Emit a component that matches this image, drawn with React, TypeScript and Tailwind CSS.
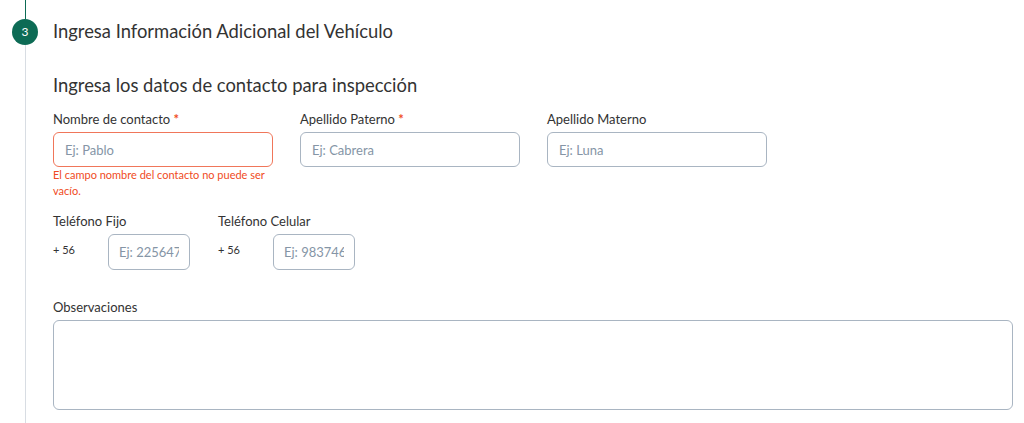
export default function App() {
    return (
        <div className="h-[423px] w-[1024px] overflow-hidden bg-white flex font-['Lato',sans-serif] text-[#333]">
            {/* STEP RAIL */}
            <div className="w-[50px] flex flex-col items-center">
                <div className="w-px h-[19px] bg-[#0d6b55]"></div>
                <div className="w-[26px] h-[26px] rounded-full bg-[#0d6b55] text-white text-[12px] flex items-center justify-center">
                    3
                </div>
                <div className="w-px flex-1 bg-[#d8dde3]"></div>
            </div>

            {/* CONTENT */}
            <div className="flex-1 pl-[3px] pr-[11px] pt-[19px]">
                <h2 className="h-[26px] flex items-center text-[18.4px]">
                    Ingresa Información Adicional del Vehículo
                </h2>

                <h3 className="mt-[28px] text-[18.4px] leading-[24px]">
                    Ingresa los datos de contacto para inspección
                </h3>

                <div className="mt-[13px] flex gap-[27px]">
                    <div className="w-[220px]">
                        <label className="block text-[13px] leading-[18px] mb-[4px]">
                            Nombre de contacto <span className="text-[#f04b23] font-bold">*</span>
                        </label>
                        <input
                            placeholder="Ej: Pablo"
                            className="w-full h-[35px] px-[11px] text-[13px] border border-[#f0765a] rounded-[6px] outline-none placeholder:text-[#8595a6]"
                        />
                        <p className="text-[11px] leading-[16px] text-[#f04b23] pr-[4px]">
                            El campo nombre del contacto no puede ser vacío.
                        </p>
                    </div>

                    <div className="w-[220px]">
                        <label className="block text-[13px] leading-[18px] mb-[4px]">
                            Apellido Paterno <span className="text-[#f04b23] font-bold">*</span>
                        </label>
                        <input
                            placeholder="Ej: Cabrera"
                            className="w-full h-[35px] px-[11px] text-[13px] border border-[#a9b5c2] rounded-[6px] outline-none placeholder:text-[#8595a6]"
                        />
                    </div>

                    <div className="w-[220px]">
                        <label className="block text-[13px] leading-[18px] mb-[4px]">
                            Apellido Materno
                        </label>
                        <input
                            placeholder="Ej: Luna"
                            className="w-full h-[35px] px-[11px] text-[13px] border border-[#a9b5c2] rounded-[6px] outline-none placeholder:text-[#8595a6]"
                        />
                    </div>
                </div>

                <div className="mt-[13px] flex gap-[28px]">
                    <div>
                        <label className="block text-[13px] leading-[18px] mb-[4px]">
                            Teléfono Fijo
                        </label>
                        <div className="flex items-center">
                            <span className="w-[55px] text-[11px] -mt-[3px]">+ 56</span>
                            <input
                                placeholder="Ej: 22564738"
                                className="w-[82px] h-[36px] px-[10px] text-[13px] border border-[#a9b5c2] rounded-[6px] outline-none placeholder:text-[#8595a6]"
                            />
                        </div>
                    </div>

                    <div>
                        <label className="block text-[13px] leading-[18px] mb-[4px]">
                            Teléfono Celular
                        </label>
                        <div className="flex items-center">
                            <span className="w-[55px] text-[11px] -mt-[3px]">+ 56</span>
                            <input
                                placeholder="Ej: 98374628"
                                className="w-[82px] h-[36px] px-[10px] text-[13px] border border-[#a9b5c2] rounded-[6px] outline-none placeholder:text-[#8595a6]"
                            />
                        </div>
                    </div>
                </div>

                <div className="mt-[28px]">
                    <label className="block text-[13px] leading-[18px] mb-[4px]">
                        Observaciones
                    </label>
                    <textarea className="block w-full h-[90px] p-[10px] text-[13px] border border-[#a9b5c2] rounded-[6px] outline-none resize-none"></textarea>
                </div>
            </div>
        </div>
    );
}
